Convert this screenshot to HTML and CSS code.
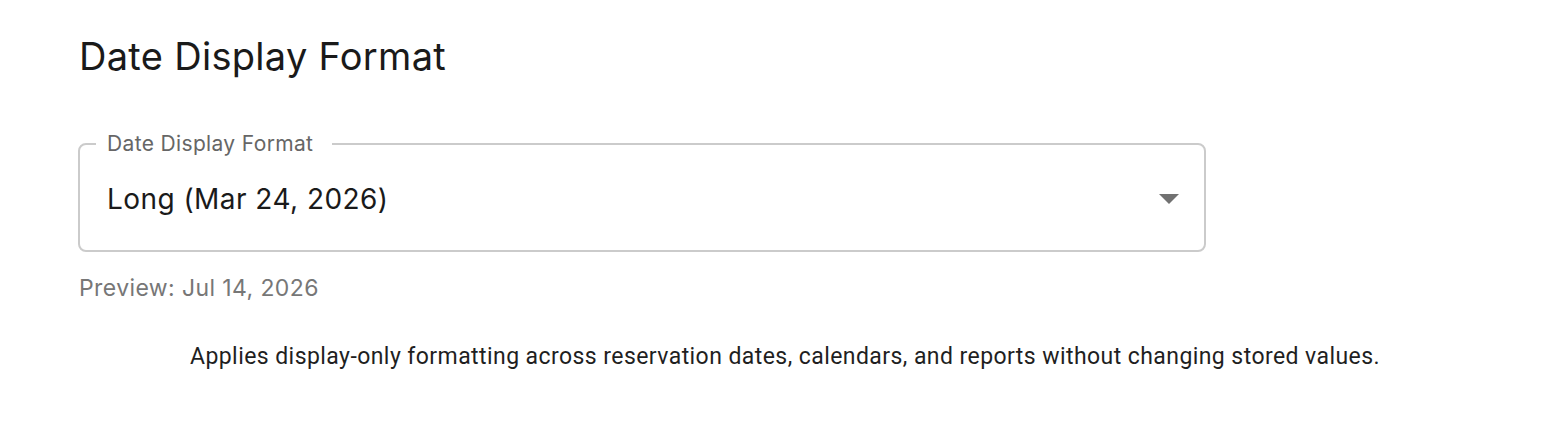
FILE: index.html
```html
<!DOCTYPE html>
<html lang="en">
<head>
<meta charset="utf-8">
<title>Date Display Format</title>
<link rel="stylesheet" href="styles.css">
</head>
<body>
<main class="page">
  <h1 class="title">Date Display Format</h1>
  <div class="field">
    <fieldset class="outline">
      <legend class="legend">Date Display Format</legend>
    </fieldset>
    <div class="select">
      <span class="value">Long (Mar 24, 2026)</span>
      <svg class="arrow" width="20" height="10" viewBox="0 0 20 10"><path d="M0 0 L20 0 L10 10 Z" fill="#717171"/></svg>
    </div>
  </div>
  <p class="preview">Preview: Jul 14, 2026</p>
  <p class="note">Applies display-only formatting across reservation dates, calendars, and reports without changing stored values.</p>
</main>
</body>
</html>
```
FILE: styles.css
```css
html, body {
  margin: 0;
  padding: 0;
  background: #ffffff;
}
.page {
  padding: 30px 63px 0 79px;
  font-family: Inter, "Noto Sans", sans-serif;
  color: #222222;
}
.title {
  margin: 0;
  font-size: 38px;
  font-weight: 400;
  line-height: 52px;
  letter-spacing: 0.3px;
  color: #1a1a1a;
}
.field {
  position: relative;
  margin-top: 62px;
  margin-left: -1px;
  width: 1128px;
  height: 108px;
}
.outline {
  position: absolute;
  inset: -12px 0 0 0;
  margin: 0;
  padding: 0 16px;
  border: 2px solid #cbcbcb;
  border-radius: 8px;
  pointer-events: none;
}
.legend {
  padding: 0 19px 0 11px;
  font-size: 21px;
  line-height: 24px;
  color: #666666;
  letter-spacing: 0.35px;
}
.select {
  display: flex;
  align-items: center;
  justify-content: space-between;
  height: 100%;
  padding: 0 27px 0 29px;
  box-sizing: border-box;
}
.value {
  font-size: 28px;
  letter-spacing: 0.45px;
  color: #1a1a1a;
  padding-top: 2px;
}
.arrow {
  display: block;
  margin-top: 2px;
}
.preview {
  margin: 24px 0 0 0;
  font-size: 23px;
  line-height: 24px;
  color: #777777;
  letter-spacing: 0.4px;
}
.note {
  margin: 44px 0 0 0;
  font-family: Roboto, "Noto Sans", sans-serif;
  font-size: 23px;
  line-height: 26px;
  color: #1f1f1f;
  letter-spacing: 0.43px;
  text-align: center;
}
```
